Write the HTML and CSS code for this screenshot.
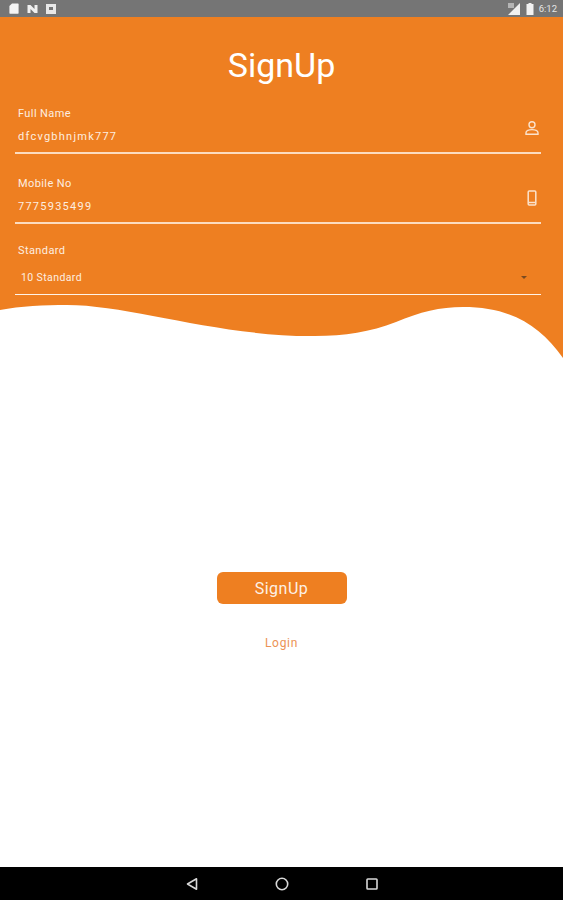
FILE: index.html
```html
<!DOCTYPE html>
<html lang="en">
<head>
    <meta charset="UTF-8">
    <meta name="viewport" content="width=device-width, initial-scale=1.0">
    <title>SignUp</title>
    <link rel="stylesheet" href="styles.css">
</head>
<body>
    <div class="screen">
        <!-- status bar -->
        <div class="status-bar">
            <div class="status-icons">
                <svg width="10" height="11" viewBox="0 0 10 11"><path d="M3 .5h6a.6.6 0 0 1 .6.6v9a.6.6 0 0 1-.6.6H1a.6.6 0 0 1-.6-.6V3z" fill="#f4f4f4"/></svg>
                <svg width="11" height="10" viewBox="0 0 11 10"><path d="M.5 1h3l4 4V1h3v8h-3l-4-4v4h-3z" fill="#f0f0f0"/></svg>
                <svg width="10" height="10" viewBox="0 0 10 10"><path fill-rule="evenodd" d="M0 0h10v10H0zM3 3v3h4V3z" fill="#e8e8e8"/><circle cx="5" cy="4.5" r="1.2" fill="#757575"/></svg>
            </div>
            <div class="status-right">
                <svg width="13" height="12" viewBox="0 0 13 12"><path d="M12 0v12H0z" fill="#f0f0f0"/><path d="M0 0h6v5H0z" fill="#b5b5b5"/></svg>
                <svg width="8" height="12" viewBox="0 0 8 12"><path d="M2.5 0h3v1H7.500v11H.5V1h2z" fill="#f2f2f2"/></svg>
                <span class="clock">6:12</span>
            </div>
        </div>

        <!-- orange header with the form -->
        <div class="header">
            <svg class="wave" width="563" height="60" viewBox="0 0 563 60">
                <path d="M0 12C20 8 45 7 67 7C130 7 220 39 315 38C345 38 370 34 396 24C420 14 440 9 463 9C510 9 540 27 563 60V60H0z" fill="#fff"/>
            </svg>
            <h1 class="title">SignUp</h1>
            <form class="signup-form">
                <div class="field">
                    <label class="field-label">Full Name</label>
                    <div class="field-row">
                        <span class="field-value">dfcvgbhnjmk777</span>
                        <svg class="field-icon" width="16" height="16" viewBox="0 0 16 16" fill="none" stroke="#fbe3cd" stroke-width="1.4"><circle cx="8" cy="4.8" r="3"/><path d="M2 14.300v-1.500c0-2 3-3.200 6-3.200s6 1.200 6 3.200v1.500z"/></svg>
                    </div>
                </div>
                <div class="field">
                    <label class="field-label">Mobile No</label>
                    <div class="field-row">
                        <span class="field-value">7775935499</span>
                        <svg class="field-icon" width="16" height="16" viewBox="0 0 16 16" fill="none" stroke="#fbe3cd" stroke-width="1.500"><rect x="4.200" y="1" width="7.600" height="14" rx="1"/><path d="M5 12.500h6"/></svg>
                    </div>
                </div>
                <div class="field field-select">
                    <label class="field-label">Standard</label>
                    <div class="field-row">
                        <span class="select-value">10 Standard</span>
                        <span class="select-arrow"></span>
                    </div>
                </div>
            </form>
        </div>

        <!-- actions -->
        <div class="actions">
            <button type="button" class="signup-btn">SignUp</button>
            <a href="#" class="login-link">Login</a>
        </div>

        <!-- navigation bar -->
        <div class="nav-bar">
            <svg width="14" height="14" viewBox="0 0 14 14" fill="none" stroke="#d8d8d8" stroke-width="1.600"><path d="M11.500 1.800v10.400L2.500 7z" stroke-linejoin="round"/></svg>
            <svg width="14" height="14" viewBox="0 0 14 14" fill="none" stroke="#d8d8d8" stroke-width="1.600"><circle cx="7" cy="7" r="5.700"/></svg>
            <svg width="14" height="14" viewBox="0 0 14 14" fill="none" stroke="#d8d8d8" stroke-width="1.600"><rect x="2" y="2" width="10" height="10" rx=".8"/></svg>
        </div>
    </div>
</body>
</html>
```

FILE: styles.css
```css
html, body {
    margin: 0;
    padding: 0;
}

body {
    font-family: Roboto, 'Liberation Sans', sans-serif;
    background: #ffffff;
}

.screen {
    display: flex;
    flex-direction: column;
    width: 563px;
    height: 900px;
    overflow: hidden;
}

.status-bar {
    display: flex;
    justify-content: space-between;
    align-items: center;
    height: 17px;
    padding: 0 6px 0 9px;
    background: #757575;
}

.status-icons,
.status-right {
    display: flex;
    align-items: center;
}

.status-icons {
    gap: 8px;
}

.status-right {
    gap: 5px;
}

.clock {
    color: #e6e6e6;
    font-size: 9.500px;
}

.header {
    position: relative;
    box-sizing: border-box;
    height: 341px;
    padding-top: 28px;
    background: #ee7f21;
}

.wave {
    position: absolute;
    left: 0;
    bottom: 0;
    display: block;
}

.title {
    margin: 0;
    color: #ffffff;
    font-size: 34px;
    font-weight: 400;
    line-height: 40px;
    text-align: center;
}

.signup-form {
    position: relative;
    display: flex;
    flex-direction: column;
    gap: 23px;
    margin: 22px 22px 0 15px;
}

.field {
    height: 45px;
    border-bottom: 2px solid #fcdcbf;
    color: #fdeee0;
}

.field-label {
    display: block;
    padding-left: 3px;
    font-size: 11px;
    line-height: 14px;
    letter-spacing: 0.4px;
}

.field-row {
    display: flex;
    justify-content: space-between;
    align-items: center;
    height: 30px;
    padding: 0 1px 0 3px;
}

.field-value {
    font-size: 11px;
    letter-spacing: 1.25px;
}

.field-icon {
    align-self: flex-start;
    margin-top: -1px;
}

.field-select {
    height: 50px;
    margin-top: -3px;
    border-bottom: 1.500px solid #fff3e8;
}

.field-select .field-row {
    height: 38px;
}

.select-value {
    padding-left: 3px;
    font-size: 10.500px;
    letter-spacing: 0.4px;
}

.select-arrow {
    width: 0;
    height: 0;
    margin-right: 13px;
    border-left: 3px solid transparent;
    border-right: 3px solid transparent;
    border-top: 3px solid #7a4a20;
}

.actions {
    flex: 1;
    display: flex;
    flex-direction: column;
    align-items: center;
    padding-top: 214px;
    background: #ffffff;
}

.signup-btn {
    width: 130px;
    height: 32px;
    padding: 0;
    color: #fdf1e6;
    background: #ee7f21;
    border: none;
    border-radius: 6px;
    font-family: inherit;
    font-size: 16px;
    letter-spacing: 0.5px;
}

.login-link {
    margin-top: 31px;
    color: #ec9255;
    font-size: 12px;
    letter-spacing: 0.7px;
    line-height: 16px;
    text-decoration: none;
}

.nav-bar {
    display: flex;
    justify-content: center;
    align-items: center;
    gap: 76px;
    height: 33px;
    background: #000000;
}
```
